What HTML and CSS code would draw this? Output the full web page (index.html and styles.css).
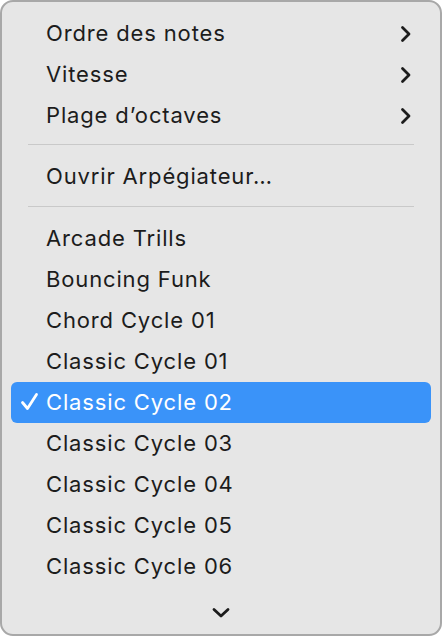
FILE: index.html
```html
<!DOCTYPE html>
<html lang="fr">
<head>
<meta charset="utf-8">
<title>Menu</title>
<link rel="stylesheet" href="styles.css">
</head>
<body>
<div class="menu">
  <ul class="list">
    <li class="item"><span class="mark"></span><span class="label">Ordre des notes</span><svg class="chev" viewBox="0 0 12 18" width="12" height="18"><polyline points="2.5,2.5 9,9 2.5,15.5"/></svg></li>
    <li class="item"><span class="mark"></span><span class="label">Vitesse</span><svg class="chev" viewBox="0 0 12 18" width="12" height="18"><polyline points="2.5,2.5 9,9 2.5,15.5"/></svg></li>
    <li class="item"><span class="mark"></span><span class="label">Plage d’octaves</span><svg class="chev" viewBox="0 0 12 18" width="12" height="18"><polyline points="2.5,2.5 9,9 2.5,15.5"/></svg></li>
    <li class="sep"></li>
    <li class="item"><span class="mark"></span><span class="label">Ouvrir Arpégiateur…</span></li>
    <li class="sep"></li>
    <li class="item"><span class="mark"></span><span class="label">Arcade Trills</span></li>
    <li class="item"><span class="mark"></span><span class="label">Bouncing Funk</span></li>
    <li class="item"><span class="mark"></span><span class="label">Chord Cycle 01</span></li>
    <li class="item"><span class="mark"></span><span class="label">Classic Cycle 01</span></li>
    <li class="item selected"><span class="mark"><svg viewBox="0 0 20 20" width="20" height="20"><polyline points="2.5,10.5 7.5,16.5 16.5,2.5"/></svg></span><span class="label">Classic Cycle 02</span></li>
    <li class="item"><span class="mark"></span><span class="label">Classic Cycle 03</span></li>
    <li class="item"><span class="mark"></span><span class="label">Classic Cycle 04</span></li>
    <li class="item"><span class="mark"></span><span class="label">Classic Cycle 05</span></li>
    <li class="item"><span class="mark"></span><span class="label">Classic Cycle 06</span></li>
  </ul>
  <div class="more"><svg viewBox="0 0 20 12" width="20" height="12"><polyline points="3,2.5 10,9 17,2.5"/></svg></div>
</div>
</body>
</html>
```
FILE: styles.css
```css
html, body {
  margin: 0;
  padding: 0;
  background: #ffffff;
}
body {
  font-family: Inter, "Noto Sans", "Liberation Sans", sans-serif;
}
.menu {
  box-sizing: border-box;
  width: 442px;
  height: 636px;
  background: #e6e6e6;
  border: 2px solid #a8a8a8;
  border-radius: 13px;
  padding: 11px 9px 0 9px;
  overflow: hidden;
}
.list {
  list-style: none;
  margin: 0;
  padding: 0;
}
.item {
  display: flex;
  align-items: center;
  height: 41px;
  line-height: 40px;
  padding: 0 19px 0 9px;
  border-radius: 6px;
  font-size: 22px;
  font-weight: 400;
  color: #1c1c1c;
  letter-spacing: 0.85px;
}
.mark {
  width: 26px;
  flex: none;
  display: flex;
  align-items: center;
}
.mark svg {
  fill: none;
  stroke: #ffffff;
  stroke-width: 2.8;
  stroke-linecap: round;
  stroke-linejoin: round;
  margin-top: -1px;
}
.label {
  flex: 1;
  white-space: nowrap;
  padding-bottom: 1.5px;
}
.chev {
  flex: none;
  fill: none;
  stroke: #1c1c1c;
  stroke-width: 2.8;
  stroke-linecap: round;
  stroke-linejoin: round;
}
.selected {
  background: #3a93f9;
  color: #ffffff;
}
.sep {
  height: 1px;
  background: #c9c9c9;
  margin: 8px 17px 11.5px 17px;
}
.more {
  display: flex;
  justify-content: center;
  padding-top: 20px;
}
.more svg {
  fill: none;
  stroke: #1c1c1c;
  stroke-width: 2.8;
  stroke-linecap: round;
  stroke-linejoin: round;
}
```
